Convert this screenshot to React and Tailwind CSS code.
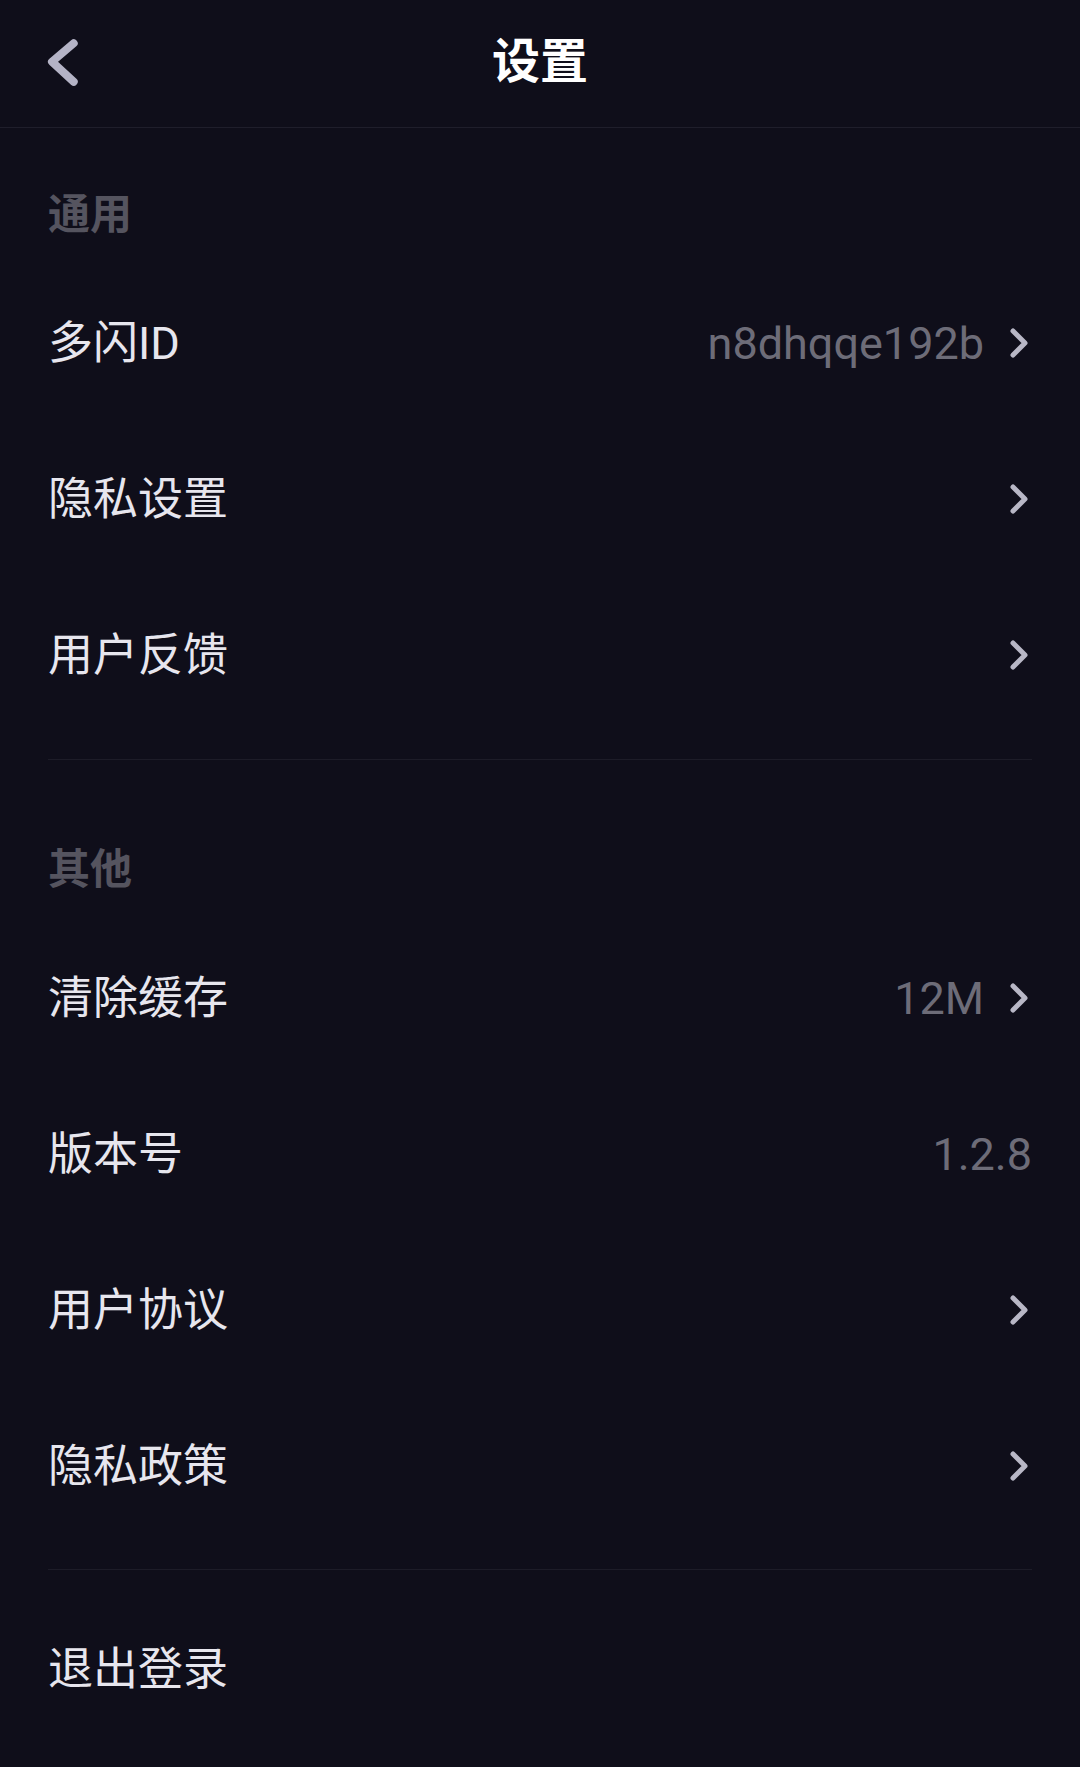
import React from "react";

const FONT = { fontFamily: 'Roboto, "Noto Sans CJK SC", sans-serif' };

function Chevron() {
  return (
    <svg width="18" height="30" viewBox="0 0 18 30" className="mr-[4px] shrink-0">
      <path d="M3 3 L15 15 L3 27" fill="none" stroke="#b8b7c6" strokeWidth="5" strokeLinecap="round" strokeLinejoin="round" />
    </svg>
  );
}

function Row({ label, value, arrow = true }) {
  return (
    <div className="h-[156px] flex items-center justify-between px-12">
      <span className="text-[45px] leading-none text-[#e7e6ee]">{label}</span>
      <div className="flex items-center gap-[26px]">
        {value && <span className="text-[45px] leading-none text-[#6d6c78]">{value}</span>}
        {arrow && <Chevron />}
      </div>
    </div>
  );
}

function SectionTitle({ children, top }) {
  return (
    <div className={`px-12 ${top} pb-[22px]`}>
      <div className="text-[42px] leading-[56px] font-bold text-[#55545f]">{children}</div>
    </div>
  );
}

export default function App() {
  return (
    <div className="min-h-screen w-full bg-[#0f0e1a]" style={FONT}>
      <div className="h-[128px] border-b border-[#1f1e2b] grid grid-cols-[1fr_auto_1fr] items-center pb-[4px]">
        <div className="pl-[46px] flex items-center">
          <svg width="34" height="52" viewBox="0 0 34 52">
            <path d="M27.7 7.3 L6 25.7 L27.7 45.7" fill="none" stroke="#b4b3c6" strokeWidth="8" strokeLinecap="round" strokeLinejoin="round" />
          </svg>
        </div>
        <div className="text-[48px] leading-none font-bold text-white">设置</div>
        <div />
      </div>

      <SectionTitle top="pt-[59px]">通用</SectionTitle>
      <Row label="多闪ID" value="n8dhqqe192b" />
      <Row label="隐私设置" />
      <Row label="用户反馈" />
      <div className="mt-[26px] mx-12 h-px bg-[#1d1c28]" />

      <SectionTitle top="pt-[82px]">其他</SectionTitle>
      <Row label="清除缓存" value="12M" />
      <div className="h-[156px] flex items-center justify-between px-12">
        <span className="text-[45px] leading-none text-[#e7e6ee]">版本号</span>
        <span className="text-[45px] leading-none text-[#6d6c78]">1.2.8</span>
      </div>
      <Row label="用户协议" />
      <Row label="隐私政策" />
      <div className="mt-[25px] mx-12 h-px bg-[#1d1c28]" />

      <div className="mt-[21px] h-[156px] flex items-center px-12">
        <span className="text-[45px] leading-none text-[#e7e6ee]">退出登录</span>
      </div>
    </div>
  );
}
